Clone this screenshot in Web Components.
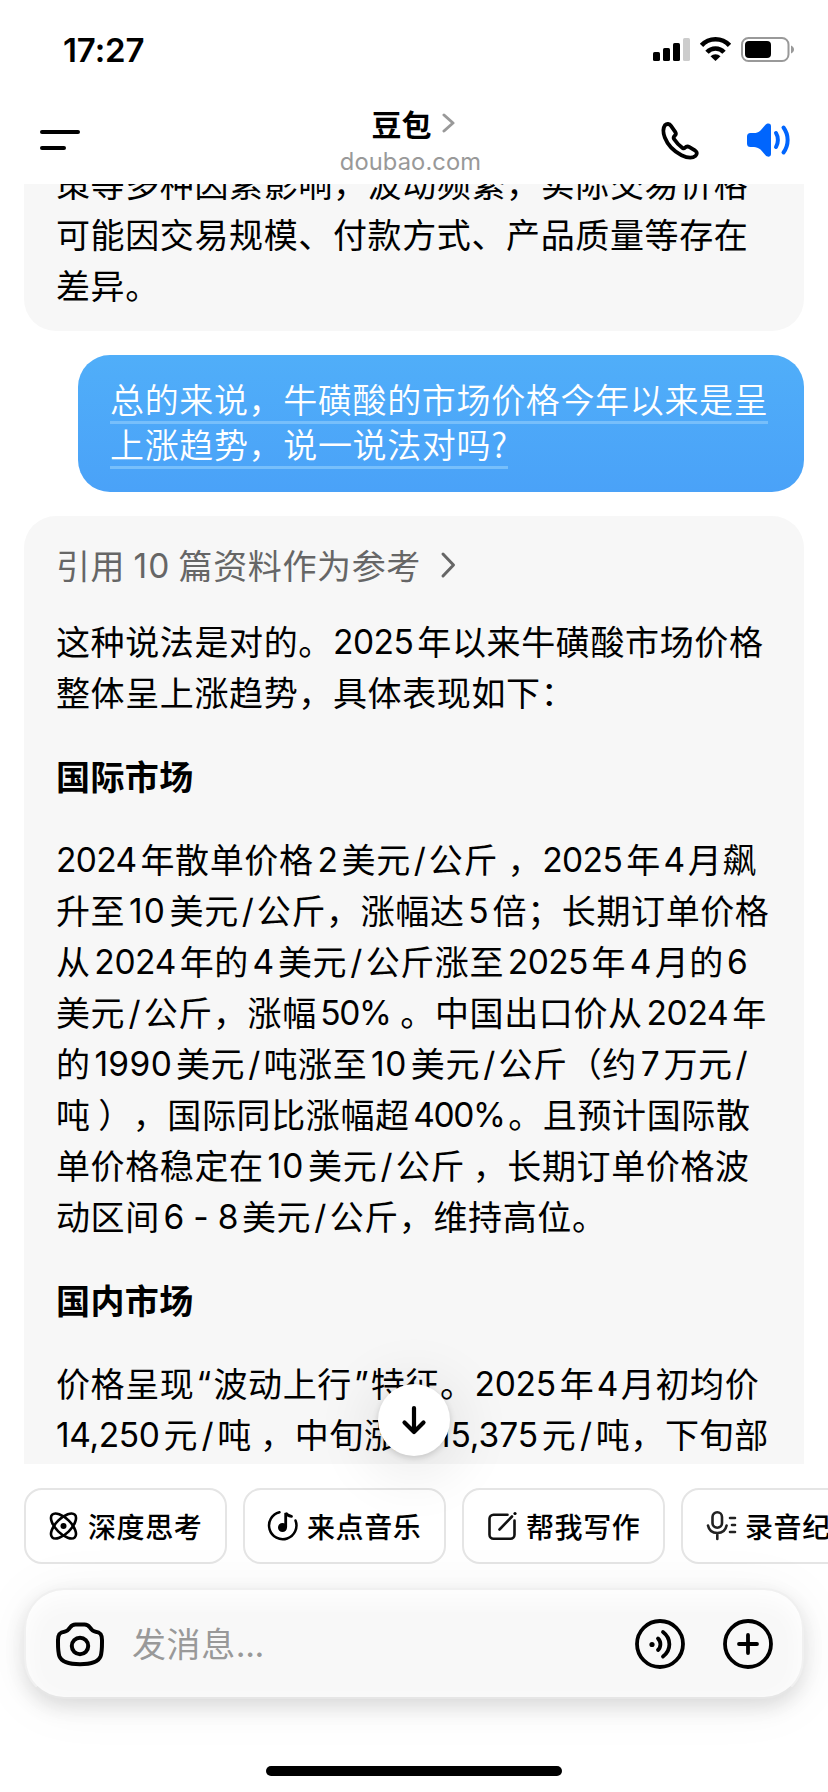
<!DOCTYPE html>
<html lang="zh-CN">
<head>
<meta charset="utf-8">
<title>豆包</title>
<style>
html,body{margin:0;padding:0;background:#fff}
body{width:828px;height:1792px;overflow:hidden;font-family:Inter,"Noto Sans CJK SC",sans-serif;color:#000}
</style>
</head>
<body>
<chat-app></chat-app>
<script>
const define = (name, html, setup) => {
  const t = document.createElement('template');
  t.innerHTML = html;
  customElements.define(name, class extends HTMLElement {
    connectedCallback() {
      if (this.shadowRoot) return;
      this.attachShadow({mode: 'open'}).append(t.content.cloneNode(true));
      if (setup) setup(this, this.shadowRoot);
    }
  });
};

const pen = document.createElement('canvas').getContext('2d');
pen.font = '400 33.5px Inter';

/* One line of mixed text. Runs are split by "|"; "text:width" gives a latin run its own width,
   and a trailing "<" in the width sets it flush left. Tracking is chosen so that a run fills its width,
   less the gap to its neighbours. */
define('text-line', `<style>
:host{display:block;height:51px;line-height:49px;font-size:34px;white-space:pre;font-family:"Noto Sans CJK SC",sans-serif;text-spacing-trim:space-all}
.c{letter-spacing:.62px}
.n{display:inline-block;height:51px;line-height:53px;vertical-align:top;font-family:Inter,"Noto Sans CJK SC",sans-serif;font-size:33.5px;text-align:center}
.l{text-align:left}
</style>`, (el, root) => {
  for (const seg of el.getAttribute('t').split('|')) {
    const s = document.createElement('span');
    const m = seg.match(/^(.+):([\d.]+)(<?)$/);
    if (!m) { s.className = 'c'; s.textContent = seg; root.append(s); continue; }
    const text = m[1], w = +m[2], left = m[3];
    s.className = 'n' + (left ? ' l' : '');
    s.textContent = text;
    s.style.width = w + 'px';
    if (text.length > 1) {
      const target = w - (left ? 4 : 7.5);
      const ls = (target - pen.measureText(text).width) / text.length;
      s.style.letterSpacing = Math.max(-1.4, Math.min(1, ls)).toFixed(2) + 'px';
    }
    root.append(s);
  }
});

define('status-bar', `<style>
:host{display:flex;justify-content:space-between;align-items:center;height:98px;padding:0 34px 0 63px;box-sizing:border-box}
b{font:600 33px/40px Inter,sans-serif;letter-spacing:-.1px;margin-top:2px}
svg{display:block}
</style>
<b>17:27</b>
<svg width="142" height="26" viewBox="652 36 142 26">
<rect x="653" y="52" width="7" height="9" rx="1.6"/><rect x="663" y="48" width="7" height="13" rx="1.6"/><rect x="673" y="43" width="7" height="18" rx="1.6"/><rect x="683" y="38" width="7" height="23" rx="1.6" fill="#ccc"/>
<g fill="none" stroke="#000" stroke-width="4.6"><path d="M701.5 45.4a19 19 0 0 1 28 0"/><path d="M707 52.3a11.5 11.5 0 0 1 17 0"/></g>
<path d="M715.5 61l-5-4.8a7.5 7.5 0 0 1 10 0z"/>
<rect x="742" y="38" width="46.500" height="23" rx="6.500" fill="none" stroke="#999" stroke-width="2"/>
<rect x="745" y="41" width="26" height="17" rx="4"/><path d="M791 45.500c4 1.500 4 6.500 0 8z" fill="#999"/>
</svg>`);

define('nav-bar', `<style>
:host{display:grid;grid-template-columns:200px 1fr 200px;height:86px;overflow:hidden}
.m{padding:32px 0 0 40px}
.t{display:flex;flex-direction:column;align-items:center;padding-right:7px}
.a{display:flex;align-items:center;gap:10px;height:40px;padding:5px 0 0 5px}
h1{margin:0;font:600 30px/38px "Noto Sans CJK SC",sans-serif}
p{margin:5px 0 0;font:400 23.700px/28px Inter,sans-serif;color:#999;letter-spacing:.1px}
svg{display:block}
.r{display:flex;justify-content:flex-end;align-items:flex-start;padding:21px 38px 0 0;gap:45px}
</style>
<div class="m"><svg width="40" height="20"><rect width="40" height="4" rx="2"/><rect y="16" width="26" height="4" rx="2"/></svg></div>
<div class="t"><div class="a"><h1>豆包</h1><svg width="13" height="20" fill="none" stroke="#999" stroke-width="3" stroke-linecap="round" stroke-linejoin="round"><path d="M2 2l9 8-9 8"/></svg></div><p>doubao.com</p></div>
<div class="r">
<svg width="42" height="44" viewBox="659 119 42 44" fill="none" stroke="#000" stroke-width="3.800" stroke-linejoin="round"><path d="M665 125.200c1.800-1.800 4.400-1.600 6 .6l4.200 6c1 1.500.9 2.600-.2 3.700-1.600 1.500-2 2-1 3.600 2.400 3.700 5.200 6.500 8.700 9 .9.5 1.500.4 2.200-.4 1.400-1.500 3-1.600 4.600-.6l5.800 3.600c2 1.400 2 3.400.2 5.200-3 2.600-8.500 2-14-.7-7.600-3.900-13.900-10.500-16.700-17.700-1.900-5-1.700-9.600.2-12.300z"/></svg>
<svg width="44" height="36" viewBox="746 122 44 36" style="margin-top:3px"><path d="M750.500 133h3.500c2 0 4.500-.8 6.500-2.600l5-5.600c1.800-2 5.500-1.800 5.500 1.200v28c0 3-3.500 3.500-5.500 1.200l-5-5.600c-2-1.800-4.500-2.600-6.500-2.600h-3.500a3.500 3.500 0 0 1-3.500-3.500v-7a3.500 3.500 0 0 1 3.500-3.500z" fill="#0065fd"/><path d="M776 133c2.500 4 2.500 10 0 14M783.500 127.500c5.500 7.500 5.500 17.500 0 25" fill="none" stroke="#0065fd" stroke-width="4" stroke-linecap="round"/></svg>
</div>`);

define('bot-bubble', `<style>
:host{display:flow-root;box-sizing:border-box;margin:0 24px;padding:0 32px;background:#f7f7f7}
</style><slot></slot>`);

define('user-bubble', `<style>
:host{display:block;box-sizing:border-box;width:726px;height:137px;margin:24px 24px 24px 78px;padding:23px 32px 0;border-radius:32px;background:linear-gradient(#50aef9,#4aa2f8);color:#fff}
div{width:max-content;height:46px;font:350 34px/41.500px "Noto Sans CJK SC",sans-serif;letter-spacing:.65px;background:linear-gradient(#77bffb,#77bffb) 0 43px/100% 3px no-repeat;margin-bottom:-1.500px;white-space:nowrap}
</style><div>总的来说，牛磺酸的市场价格今年以来是呈</div><div>上涨趋势，说一说法对吗?</div>`);

define('cite-row', `<style>
:host{display:flex;align-items:center;gap:19px;color:#666;height:51px}
svg{display:block;margin-top:-1px}
</style><text-line t="引用|10:53.3|篇资料作为参考"></text-line><svg width="18" height="28" fill="none" stroke="#666" stroke-width="3" stroke-linecap="round" stroke-linejoin="round"><path d="M3 3l10.500 11L3 25"/></svg>`);

define('section-title', `<style>
:host{display:block;height:51px;font:600 34px/48px "Noto Sans CJK SC",sans-serif;letter-spacing:.4px;margin:34px 0 31px}
</style><slot></slot>`);

define('jump-down', `<style>
:host{position:absolute;left:378px;top:1384px;width:72px;height:72px;border-radius:50%;background:#fff;box-shadow:0 2px 6px rgba(0,0,0,.16),0 8px 60px 10px rgba(0,0,0,.09);display:flex;align-items:center;justify-content:center}
</style><svg width="28" height="32" viewBox="0 0 28 32" fill="none" stroke="#000" stroke-width="4.200" stroke-linecap="round" stroke-linejoin="round"><path d="M14 4v24M4.500 18.500L14 28l9.500-9.500"/></svg>`);

const ICONS = {
  atom: '<g fill="none" stroke="#000" stroke-width="2.600"><ellipse cx="14.500" cy="15" rx="16" ry="7.500" transform="rotate(45 14.500 15)"/><ellipse cx="14.500" cy="15" rx="16" ry="7.500" transform="rotate(-45 14.500 15)"/></g><circle cx="14.500" cy="15" r="3"/>',
  music: '<path d="M11.500 1.200A13.700 13.700 0 1 0 27.500 9.500" fill="none" stroke="#000" stroke-width="2.500" stroke-linecap="round"/><circle cx="14.500" cy="16.500" r="4.500"/><path d="M17.700 16V2c1 2 3 2.800 5.800 3.300" fill="none" stroke="#000" stroke-width="2.800" stroke-linecap="round"/>',
  write: '<path d="M20.500 3.800H6.500a4 4 0 0 0-4 4v16a4 4 0 0 0 4 4h17a4 4 0 0 0 4-4V9.500M12.500 18.500L25 5.500" fill="none" stroke="#111" stroke-width="2.600" stroke-linecap="round"/><circle cx="28" cy="2.500" r="1.600"/>',
  mic: '<g fill="none" stroke="#222" stroke-width="2.600" stroke-linecap="round"><rect x="6.500" y="1.200" width="9.500" height="15.500" rx="4.750"/><path d="M2 14.500c1 5 4.500 7.500 9.300 7.500s8.300-2.500 9.300-7.500M11.300 22v6M24 7h5M26 14h3M24 21h5"/></g>'
};
define('quick-chip', `<style>
:host{display:flex;flex:none;align-items:center;box-sizing:border-box;width:203px;height:76px;border:2px solid #e5e5e5;border-radius:18px;background:#fff;padding-left:23px;gap:9px;font:500 28px/38px "Noto Sans CJK SC",sans-serif;letter-spacing:.6px;white-space:nowrap}
svg{flex:none;overflow:visible}
</style><svg width="30" height="30" viewBox="0 0 30 30"></svg><slot></slot>`, (el, root) => {
  root.querySelector('svg').innerHTML = ICONS[el.getAttribute('icon')];
});

define('message-box', `<style>
:host{display:flex;align-items:center;box-sizing:border-box;height:111px;margin:24px 24px 0;padding:0 28px 0 29px;border:2px solid #f0f0f0;border-bottom-color:#e6e6e6;border-radius:40px;background:#f8f8f8;box-shadow:0 8px 20px rgba(0,0,0,.12),0 4px 60px rgba(0,0,0,.05),inset 0 8px 24px #fff}
span{flex:1;margin-left:27px;font:400 34px/50px "Noto Sans CJK SC",sans-serif;letter-spacing:.6px;color:#999}
i{font:400 34px/50px Inter,sans-serif;letter-spacing:-.4px}
svg{display:block;flex:none}
.p{margin-left:36px}
</style>
<svg width="50" height="50" viewBox="0 0 50 50" fill="none" stroke="#000" stroke-width="4" stroke-linejoin="round"><path d="M20.500 5.500h9c2.500 0 4 1 5.300 2.800 1.500 2.500 2.700 4 5.800 4.400 4.500.5 6.400 2.500 6.400 8.300 0 7 .200 12-1.500 16.500-2.500 6-10.500 7.700-20.500 7.700s-18-1.700-20.500-7.700C2.800 33 3 28 3 21c0-5.800 1.900-7.800 6.400-8.300 3.100-.4 4.300-1.900 5.800-4.400 1.300-1.800 2.800-2.800 5.300-2.800z"/><circle cx="25" cy="27" r="8.200"/></svg>
<span>发消息<i>...</i></span>
<svg width="52" height="52" viewBox="0 0 52 52" fill="none" stroke="#000" stroke-width="3.800" stroke-linecap="round"><circle cx="26" cy="26" r="23"/><circle cx="18" cy="26.500" r="2.600" fill="#000" stroke="none"/><path d="M24 20.500c3.200 3 3.200 8.500 0 11.500M29 14c8.500 6.500 8.500 18 0 24.500"/></svg>
<svg class="p" width="52" height="52" viewBox="0 0 52 52" fill="none" stroke="#000" stroke-width="3.800" stroke-linecap="round"><circle cx="26" cy="26" r="23"/><path d="M26 17v18M17 26h18"/></svg>`);

define('chat-app', `<style>
:host{display:flex;flex-direction:column;position:relative;width:828px;height:1792px;overflow:hidden;background:#fff}
.feed{height:1280px;overflow:hidden;flex:none}
.first{border-radius:0 0 32px 32px;height:147px}
.first text-line:first-child{margin-top:-26px}
.main{border-radius:32px 32px 0 0;padding-top:24px;height:1000px}
cite-row{margin-bottom:25px}
.chips{display:flex;gap:16px;padding:24px 0 0 24px;flex:none}
.home{flex:none;width:296px;height:10px;border-radius:5px;background:#000;margin:67px auto 0}
</style>
<status-bar></status-bar>
<nav-bar></nav-bar>
<div class="feed">
<bot-bubble class="first"><text-line t="策等多种因素影响，波动频繁，实际交易价格"></text-line><text-line t="可能因交易规模、付款方式、产品质量等存在"></text-line><text-line t="差异。"></text-line></bot-bubble>
<user-bubble></user-bubble>
<bot-bubble class="main">
<cite-row></cite-row>
<text-line t="这种说法是对的。|2025:84.4&lt;|年以来牛磺酸市场价格"></text-line><text-line t="整体呈上涨趋势，具体表现如下："></text-line>
<section-title>国际市场</section-title>
<text-line t="2024:84.5&lt;|年散单价格|2:28|美元|/:18|公斤| :9.500|，|2025:84&lt;|年|4:27|月飙"></text-line>
<text-line t="升至|10:44.3|美元|/:18|公斤，涨幅达|5:28|倍；长期订单价格"></text-line>
<text-line t="从|2024:89|年的|4:29|美元|/:18.5|公斤涨至|2025:87.5|年|4:28.5|月的|6:27"></text-line>
<text-line t="美元|/:18.5|公斤，涨幅|50%:77| :6.5|。中国出口价从|2024:89.5|年"></text-line>
<text-line t="的|1990:85.3|美元|/:18.3|吨涨至|10:43.5|美元|/:18.3|公斤（约|7:26.5|万元|/:18"></text-line>
<text-line t="吨| :7.500|），国际同比涨幅超|400%:98.5|。且预计国际散"></text-line>
<text-line t="单价格稳定在|10:44.3|美元|/:18.5|公斤| :7.700|，长期订单价格波"></text-line>
<text-line t="动区间|6 - 8:82|美元|/:18.5|公斤，维持高位。"></text-line>
<section-title>国内市场</section-title>
<text-line t="价格呈现|“:19|波动上行|”:18.7|特征。|2025:85.2&lt;|年|4:26.5|月初均价"></text-line>
<text-line t="14,250:107.5&lt;|元|/:19|吨| :8.3|，中旬涨至|15,375:108.6|元|/:19.3|吨，下旬部"></text-line>
</bot-bubble>
</div>
<div class="chips"><quick-chip icon="atom">深度思考</quick-chip><quick-chip icon="music">来点音乐</quick-chip><quick-chip icon="write">帮我写作</quick-chip><quick-chip icon="mic">录音纪要</quick-chip></div>
<message-box></message-box>
<div class="home"></div>
<jump-down></jump-down>`);
</script>
</body>
</html>
